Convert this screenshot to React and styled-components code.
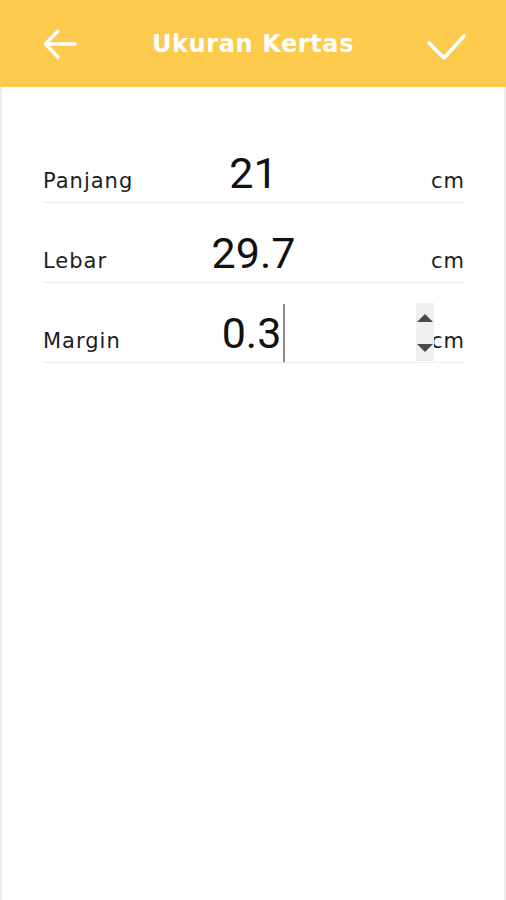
import styled, { createGlobalStyle } from "styled-components";

const GlobalStyle = createGlobalStyle`
  html, body {
    margin: 0;
    padding: 0;
    background: #ffffff;
  }
  body {
    font-family: "DejaVu Sans", "Open Sans", sans-serif;
  }
`

const Screen = styled.div`
  width: 506px;
  height: 900px;
  display: flex;
  flex-direction: column;
  background: #ffffff;
`

const Toolbar = styled.header`
  height: 87px;
  flex-shrink: 0;
  background: #fccb4e;
  display: grid;
  grid-template-columns: 120px 1fr 120px;
  align-items: center;
`

const IconButton = styled.button`
  justify-self: ${(p) => (p.$end ? "end" : "start")};
  margin: ${(p) => (p.$end ? "4px 40px 0 0" : "2px 0 0 40px")};
  width: 40px;
  height: 40px;
  padding: 0;
  border: none;
  background: transparent;
  display: flex;
  align-items: center;
  justify-content: center;
`

const Title = styled.h1`
  margin: 0;
  text-align: center;
  color: #ffffff;
  font-family: "DejaVu Sans", "Open Sans", sans-serif;
  font-weight: 700;
  font-size: 24px;
  letter-spacing: 0.6px;
  padding-bottom: 0;
`

const Body = styled.main`
  flex: 1;
  border-left: 2px solid #ececec;
  border-right: 2px solid #ececec;
  padding: 36px 40px 0 41px;
`

const Row = styled.div`
  position: relative;
  display: grid;
  grid-template-columns: 1fr auto 1fr;
  align-items: baseline;
  padding-top: 21px;
  border-bottom: 1.5px solid #ececec;
`

const Label = styled.span`
  font-size: 21px;
  letter-spacing: 1px;
  color: #1d1d1d;
`

const Value = styled.span`
  display: inline-flex;
  align-items: baseline;
  height: 58px;
  line-height: 58px;
  font-family: Roboto, "Liberation Sans", sans-serif;
  font-size: 43px;
  color: #111111;
`

const Caret = styled.span`
  align-self: stretch;
  width: 2px;
  margin-left: 2px;
  background: #8a8a8a;
`

const Unit = styled.span`
  justify-self: end;
  font-size: 21px;
  letter-spacing: 1px;
  margin-right: -1px;
  color: #1d1d1d;
`

const Spinner = styled.div`
  position: absolute;
  right: 30px;
  bottom: 1px;
  width: 18px;
  height: 58px;
  background: #efefef;
  display: flex;
  flex-direction: column;
  justify-content: space-between;
  align-items: center;
  padding: 11px 0 9px;
  box-sizing: border-box;
`

const Arrow = styled.span`
  width: 0;
  height: 0;
  border-left: 8px solid transparent;
  border-right: 8px solid transparent;
  ${(p) =>
    p.$down
      ? "border-top: 8px solid #4a4a4a;"
      : "border-bottom: 8px solid #4a4a4a;"}
`

const fields = [
  { label: "Panjang", value: "21" },
  { label: "Lebar", value: "29.7" },
  { label: "Margin", value: "0.3", focused: true },
];

function App() {
  return (
    <Screen>
      <GlobalStyle />
      <Toolbar>
        <IconButton aria-label="Kembali">
          <svg width="36" height="36" viewBox="0 0 36 36" fill="none" stroke="#fff" strokeWidth="3.4" strokeLinecap="round" strokeLinejoin="round">
            <path d="M33 17H4" />
            <path d="M16 4L3.5 17L16 30" />
          </svg>
        </IconButton>
        <Title>Ukuran Kertas</Title>
        <IconButton $end aria-label="Simpan">
          <svg width="40" height="32" viewBox="0 0 40 32" fill="none" stroke="#fff" strokeWidth="3.6" strokeLinecap="round" strokeLinejoin="round">
            <path d="M3 13L18 28L38 6" />
          </svg>
        </IconButton>
      </Toolbar>
      <Body>
        {fields.map((f) => (
          <Row key={f.label}>
            <Label>{f.label}</Label>
            <Value>
              {f.value}
              {f.focused && <Caret />}
            </Value>
            <Unit>cm</Unit>
            {f.focused && (
              <Spinner>
                <Arrow />
                <Arrow $down />
              </Spinner>
            )}
          </Row>
        ))}
      </Body>
    </Screen>
  );
}

export default App;
